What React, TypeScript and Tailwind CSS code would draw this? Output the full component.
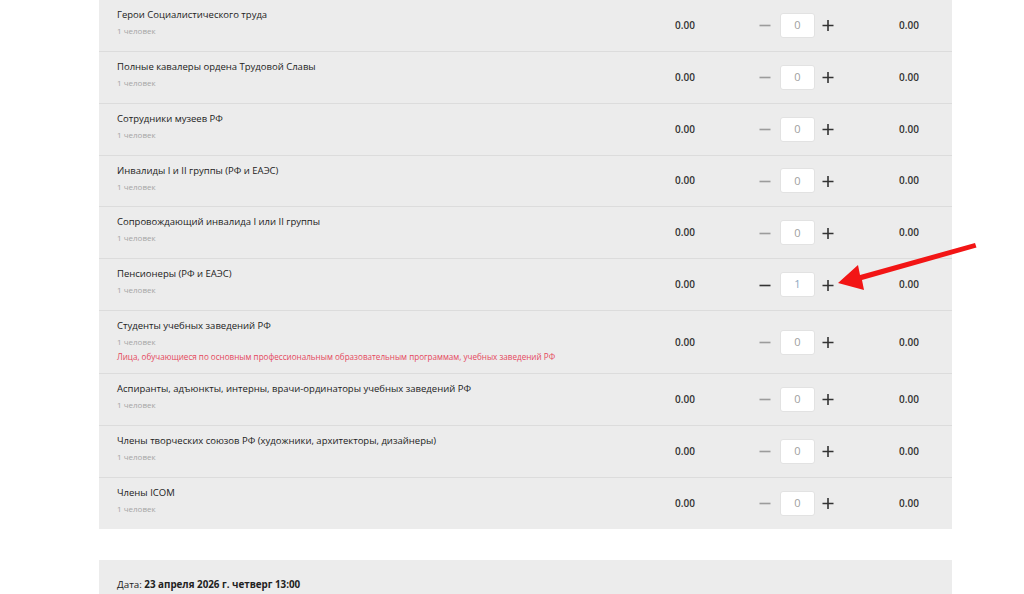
import { useState } from "react";

// Список льготных категорий билетов с выбором количества

type Category = {
  title: string;
  note?: string;
};

const CATEGORIES: Category[] = [
  { title: "Герои Социалистического труда" },
  { title: "Полные кавалеры ордена Трудовой Славы" },
  { title: "Сотрудники музеев РФ" },
  { title: "Инвалиды I и II группы (РФ и ЕАЭС)" },
  { title: "Сопровождающий инвалида I или II группы" },
  { title: "Пенсионеры (РФ и ЕАЭС)" },
  {
    title: "Студенты учебных заведений РФ",
    note: "Лица, обучающиеся по основным профессиональным образовательным программам, учебных заведений РФ",
  },
  { title: "Аспиранты, адъюнкты, интерны, врачи-ординаторы учебных заведений РФ" },
  { title: "Члены творческих союзов РФ (художники, архитекторы, дизайнеры)" },
  { title: "Члены ICOM" },
];

function Counter({ value, onChange }: { value: number; onChange: (v: number) => void }) {
  const active = value > 0;
  return (
    <div className="flex items-center">
      <button
        type="button"
        onClick={() => onChange(Math.max(0, value - 1))}
        className="w-[20px] h-[25px] grid place-items-center"
      >
        <svg width="12" height="12" viewBox="0 0 12 12">
          <path d="M0.5 6.5h11" stroke={active ? "#333" : "#9c9c9c"} strokeWidth="1.6" />
        </svg>
      </button>
      <div className="ml-[5px] w-[35px] h-[25px] rounded-[3px] bg-white border border-[#e2e2e2] grid place-items-center">
        <span className={`text-[11px] ${active ? "text-[#8aa7c0]" : "text-[#a0a0a0]"}`}>{value}</span>
      </div>
      <button
        type="button"
        onClick={() => onChange(value + 1)}
        className="ml-[5px] w-[16px] h-[25px] grid place-items-center"
      >
        <svg width="12" height="12" viewBox="0 0 12 12">
          <path d="M0.5 6.5h11M6 1v11" stroke="#333" strokeWidth="1.6" />
        </svg>
      </button>
    </div>
  );
}

export default function App() {
  const [counts, setCounts] = useState<number[]>(CATEGORIES.map((_, i) => (i === 5 ? 1 : 0)));

  return (
    <div className="relative w-[1024px] h-[594px] overflow-hidden bg-white font-['Open_Sans',sans-serif]">
      <div className="ml-[99px] w-[853px] bg-[#ececec]">
        {CATEGORIES.map((c, i) => (
          <div
            key={c.title}
            className={`flex items-center ${i < CATEGORIES.length - 1 ? "border-b border-[#dcdcdc]" : ""}`}
          >
            <div className={`flex-1 min-w-0 pl-[18px] pt-[7px] ${c.note ? "pb-[11px]" : "pb-[12.85px]"}`}>
              <div className="text-[9.5px] leading-[16px] text-[#222]">{c.title}</div>
              <div className="mt-px text-[8px] leading-[14px] text-[#a5a5a5]">1 человек</div>
              {c.note && (
                <div className="mt-[2px] text-[8.1px] leading-[11px] text-[#e5485c]">{c.note}</div>
              )}
            </div>
            <div className="w-[60px] text-center text-[10px] font-semibold text-[#333]">0.00</div>
            <div className="ml-[40px]">
              <Counter
                value={counts[i]}
                onChange={(v) => setCounts((prev) => prev.map((p, j) => (j === i ? v : p)))}
              />
            </div>
            <div className="ml-[30px] w-[86px] text-center text-[10px] font-semibold text-[#333]">0.00</div>
          </div>
        ))}
      </div>

      <div className="ml-[99px] mt-[31px] w-[853px] h-[80px] bg-[#ececec] pl-[18px] pt-[17px]">
        <div className="text-[9.8px] leading-[16px] text-[#222]">
          Дата: <span className="font-bold">23 апреля 2026 г. четверг 13:00</span>
        </div>
      </div>

      {/* стрелка-указатель поверх строки пенсионеров */}
      <svg className="absolute left-0 top-0 pointer-events-none" width="1024" height="594">
        <polygon
          points="975,243 976.5,247.5 862,280 864,290 838,283 858,265 860,275"
          fill="#f21515"
        />
      </svg>
    </div>
  );
}
